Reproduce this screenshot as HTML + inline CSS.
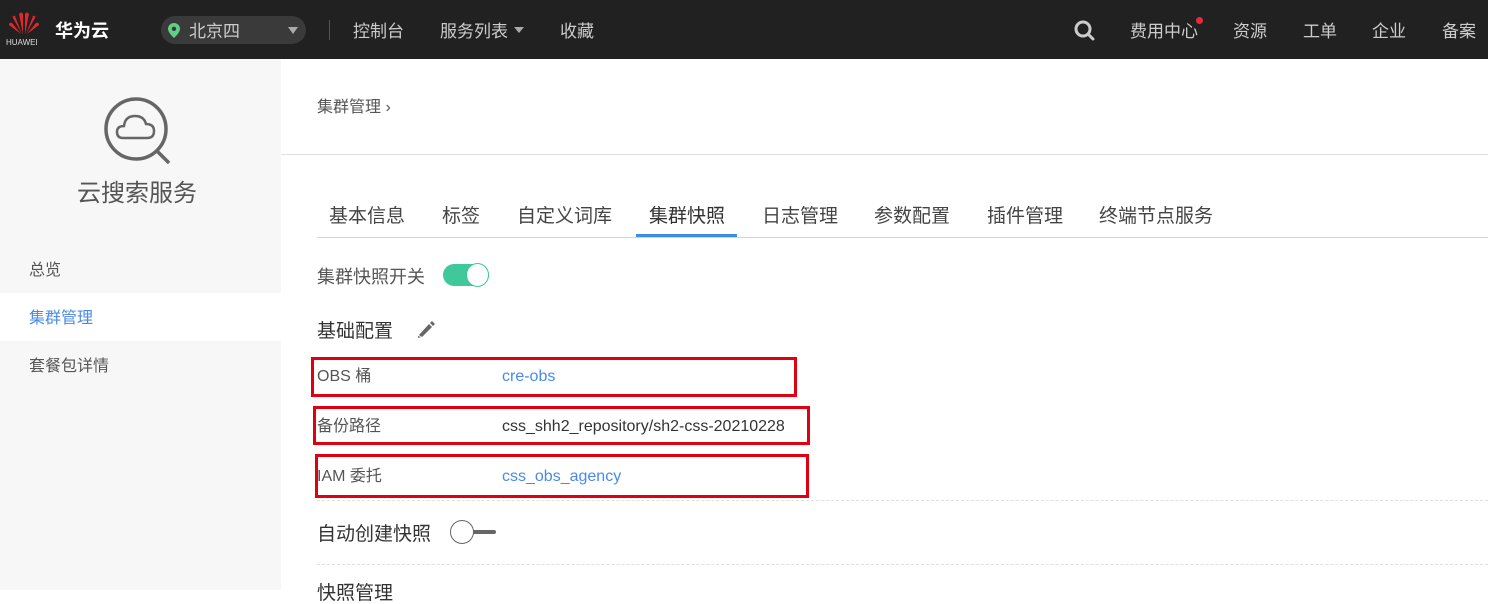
<!DOCTYPE html>
<html><head><meta charset="utf-8"><style>
*{margin:0;padding:0;box-sizing:border-box}
body{width:1488px;height:590px;overflow:hidden;position:relative;background:#fff;font-family:"Liberation Sans","Noto Sans CJK SC",sans-serif;color:#333;line-height:1}
.a{position:absolute;white-space:nowrap;line-height:1}
#top{position:absolute;left:0;top:0;width:1488px;height:59px;background:#212121}
.tn{position:absolute;top:23px;font-size:17px;color:#ccc;line-height:1}
#side{position:absolute;left:0;top:59px;width:281px;height:531px;background:#f7f7f7}
.tab{position:absolute;top:207px;font-size:19px;color:#444;line-height:1}
.rb{position:absolute;border:3px solid #e00012}
.lb{font-size:16px;color:#555}
.v{font-size:16px}
</style></head><body>
<div id="top">
 <svg class="a" style="left:8px;top:10px" width="32" height="26" viewBox="0 0 32 26">
  <g fill="#e3262a">
   <path d="M15 24 L11 4 Q13 1 15 4Z"/><path d="M17 24 L21 4 Q19 1 17 4Z"/>
   <path d="M14 24 L5 8 Q4 5 7 6Z"/><path d="M18 24 L27 8 Q28 5 25 6Z"/>
   <path d="M13 24 L1 15 Q1 12 4 13Z"/><path d="M19 24 L31 15 Q31 12 28 13Z"/>
  </g></svg>
 <div class="a" style="left:6px;top:39px;font-size:8px;color:#ddd">HUAWEI</div>
 <div class="a" style="left:55px;top:22px;font-size:18px;color:#fff;font-weight:bold">华为云</div>
 <div class="a" style="left:161px;top:16px;width:145px;height:28px;border-radius:14px;background:#3a3a3a"></div>
 <svg class="a" style="left:168px;top:23px" width="12" height="15" viewBox="0 0 12 15"><path d="M6 0C2.7 0 0 2.6 0 5.8 0 10 6 15 6 15s6-5 6-9.2C12 2.6 9.3 0 6 0z" fill="#5fd08a"/><circle cx="6" cy="5.8" r="2.2" fill="#3a3a3a"/></svg>
 <div class="a" style="left:189px;top:23px;font-size:17px;color:#ccc">北京四</div>
 <div class="a" style="left:288px;top:27px;width:0;height:0;border-left:5px solid transparent;border-right:5px solid transparent;border-top:7px solid #aaa"></div>
 <div class="a" style="left:329px;top:20px;width:1px;height:20px;background:#555"></div>
 <div class="tn" style="left:353px">控制台</div>
 <div class="tn" style="left:440px">服务列表</div>
 <div class="a" style="left:514px;top:27px;border-left:5px solid transparent;border-right:5px solid transparent;border-top:6px solid #aaa"></div>
 <div class="tn" style="left:560px">收藏</div>
 <svg class="a" style="left:1074px;top:20px" width="22" height="22" viewBox="0 0 22 22"><circle cx="9" cy="9" r="7" fill="none" stroke="#ccc" stroke-width="3"/><path d="M14 14L19 19" stroke="#ccc" stroke-width="3" stroke-linecap="round"/></svg>
 <div class="tn" style="left:1130px">费用中心</div>
 <div class="a" style="left:1196px;top:17px;width:7px;height:7px;border-radius:50%;background:#e8293b"></div>
 <div class="tn" style="left:1233px">资源</div>
 <div class="tn" style="left:1303px">工单</div>
 <div class="tn" style="left:1372px">企业</div>
 <div class="tn" style="left:1442px">备案</div>
</div>
<div id="side">
 <svg class="a" style="left:103px;top:37px" width="68" height="68" viewBox="0 0 68 68"><circle cx="33" cy="33" r="30" fill="none" stroke="#666" stroke-width="3.5"/><path d="M54 55L66 67" stroke="#666" stroke-width="3.5"/><path d="M20 42 Q14 42 14 36 Q14 30 21 30 Q22 20 32 20 Q41 20 43 28 Q51 28 51 35 Q51 42 44 42Z" fill="none" stroke="#666" stroke-width="2.5"/></svg>
 <div class="a" style="left:77px;top:123px;font-size:24px;color:#555">云搜索服务</div>
 <div class="a" style="left:29px;top:204px;font-size:16px;color:#555">总览</div>
 <div class="a" style="left:0;top:234px;width:281px;height:48px;background:#fff"></div>
 <div class="a" style="left:29px;top:252px;font-size:16px;color:#4a8ae6">集群管理</div>
 <div class="a" style="left:29px;top:300px;font-size:16px;color:#555">套餐包详情</div>
</div>
<div class="a" style="left:317px;top:100px;font-size:16px;color:#555">集群管理 ›</div>
<div class="a" style="left:281px;top:154px;width:1207px;height:1px;background:#e0e0e0"></div>
<div class="tab" style="left:329px">基本信息</div>
<div class="tab" style="left:442px">标签</div>
<div class="tab" style="left:517px">自定义词库</div>
<div class="tab" style="left:649px;color:#333">集群快照</div>
<div class="tab" style="left:762px">日志管理</div>
<div class="tab" style="left:874px">参数配置</div>
<div class="tab" style="left:987px">插件管理</div>
<div class="tab" style="left:1099px">终端节点服务</div>
<div class="a" style="left:317px;top:237px;width:1171px;height:1px;background:#d5d5d5"></div>
<div class="a" style="left:636px;top:234px;width:101px;height:3px;background:#3b8fdd"></div>
<div class="a" style="left:317px;top:268px;font-size:18px;color:#555">集群快照开关</div>
<div class="a" style="left:443px;top:264px;width:46px;height:22px;border-radius:11px;background:#3fc89a"></div>
<div class="a" style="left:466px;top:263px;width:23px;height:24px;border-radius:50%;background:#fff;border:1px solid #3fc89a"></div>
<div class="a" style="left:317px;top:322px;font-size:19px;color:#333">基础配置</div>
<svg class="a" style="left:415px;top:319px" width="22" height="20" viewBox="0 0 22 20"><path d="M4 16L14 5 17 8 7 18Z M15 4L17 2 20 5 18 7Z" fill="#666"/><path d="M3 17L6 18 3 19Z" fill="#666"/></svg>
<div class="rb" style="left:311px;top:357px;width:486px;height:40px"></div>
<div class="rb" style="left:313px;top:406px;width:497px;height:39px"></div>
<div class="rb" style="left:315px;top:454px;width:494px;height:44px"></div>
<div class="a lb" style="left:317px;top:369px">OBS 桶</div>
<div class="a v" style="left:502px;top:369px;color:#4a8ae6">cre-obs</div>
<div class="a lb" style="left:317px;top:419px">备份路径</div>
<div class="a v" style="left:502px;top:419px;color:#333">css_shh2_repository/sh2-css-20210228</div>
<div class="a lb" style="left:317px;top:469px">IAM 委托</div>
<div class="a v" style="left:502px;top:469px;color:#4a8ae6">css_obs_agency</div>
<div class="a" style="left:317px;top:500px;width:1171px;border-top:1px dashed #e0e0e0"></div>
<div class="a" style="left:317px;top:525px;font-size:19px;color:#333">自动创建快照</div>
<div class="a" style="left:466px;top:530px;width:30px;height:4px;background:#666;border-radius:2px"></div>
<div class="a" style="left:450px;top:520px;width:24px;height:24px;border-radius:50%;background:#fff;border:1px solid #666"></div>
<div class="a" style="left:317px;top:564px;width:1171px;border-top:1px dashed #e0e0e0"></div>
<div class="a" style="left:317px;top:584px;font-size:19px;color:#333">快照管理</div>
</body></html>
